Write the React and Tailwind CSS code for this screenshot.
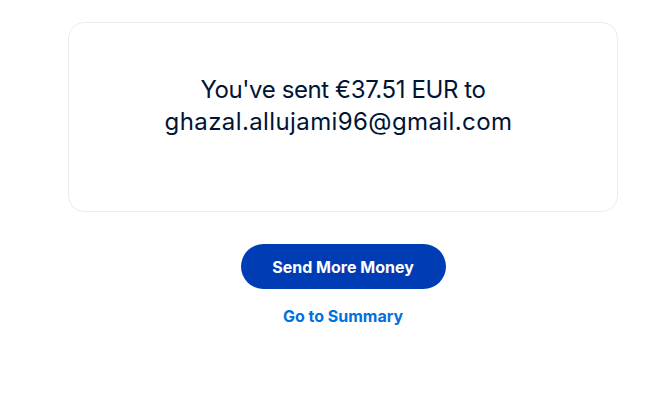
import React from 'react';

const App = () => {
  return (
    <div className="min-h-[411px] w-full bg-white font-['Inter',sans-serif]">
      <div className="pt-[22px] pl-[68px] pr-[36px] flex flex-col items-center">
        <div className="w-[550px] h-[190px] rounded-2xl border border-[#ececec] bg-white flex flex-col items-center pt-[51px]">
          <p className="text-[24px] leading-[32px] text-[#001435] text-center">
            <span className="block tracking-[-0.4px]">You've sent €37.51 EUR to</span>
            <span className="block tracking-[0.4px] pr-[9px]">ghazal.allujami96@gmail.com</span>
          </p>
        </div>
        <button className="mt-[32px] h-[45px] w-[205px] rounded-full bg-[#003cb4] text-white text-[16px] font-bold">
          Send More Money
        </button>
        <a href="#" className="mt-[15px] text-[16px] font-bold text-[#0070e0]">
          Go to Summary
        </a>
      </div>
    </div>
  );
};

export default App;
